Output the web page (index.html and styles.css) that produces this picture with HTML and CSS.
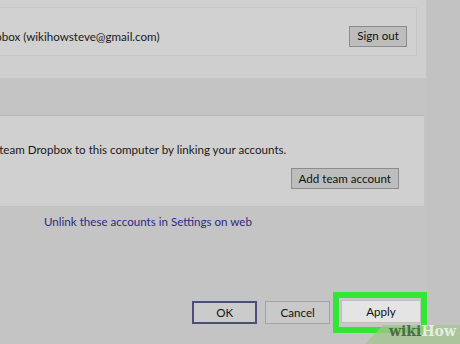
FILE: index.html
```html
<!DOCTYPE html>
<html lang="en">

<head>
    <meta charset="UTF-8">
    <meta name="viewport" content="width=device-width, initial-scale=1.0">
    <title>Dropbox Preferences - Account</title>
    <link rel="stylesheet" href="styles.css">
</head>

<body>
    <div class="janela">
        <!-- Conta pessoal -->
        <div class="painel-conta">
            <div class="caixa-conta">
                <span class="texto-conta">Dropbox (wikihowsteve@gmail.com)</span>
                <button class="botao">Sign out</button>
            </div>
        </div>

        <!-- Conta de equipe -->
        <div class="painel-equipe">
            <p class="texto-equipe">Add your team Dropbox to this computer by linking your accounts.</p>
            <div class="linha-botao">
                <button class="botao">Add team account</button>
            </div>
        </div>

        <a class="link-web" href="#">Unlink these accounts in Settings on web</a>

        <div class="rodape">
            <button class="botao botao-ok">OK</button>
            <button class="botao botao-rodape">Cancel</button>
            <div class="destaque">
                <button class="botao botao-apply">Apply</button>
            </div>
        </div>
    </div>

    <div class="marca">
        <svg class="marca-fundo" width="95" height="19" viewBox="0 0 95 19">
            <polygon points="0,19 18,0 95,0 95,19" fill="#a3c48f" fill-opacity="0.75" />
        </svg>
        <span class="marca-texto"><b class="wiki">wiki</b><b class="how">How</b></span>
    </div>
</body>

</html>
```

FILE: styles.css
```css
body {
    margin: 0;
    width: 460px;
    height: 344px;
    overflow: hidden;
    position: relative;
    background-color: #c2c2c2;
    font-family: Lato, "Noto Sans", sans-serif;
    font-size: 11.6px;
    color: #1a1a1a;
}

.janela {
    width: 427px;
    height: 344px;
    background-color: #c4c4c4;
}

.painel-conta {
    width: 426px;
    height: 78px;
    padding-top: 7px;
    box-sizing: border-box;
    background-color: #cfcfcf;
}

.caixa-conta {
    width: 417px;
    height: 49px;
    box-sizing: border-box;
    border: 1px solid #c6c6c6;
    border-left: none;
    background-color: #d1d1d1;
    display: flex;
    align-items: center;
    justify-content: space-between;
    padding: 9px 9px 0 0;
}

.texto-conta {
    margin-left: -24px;
    white-space: nowrap;
}

.botao {
    font-family: Lato, "Noto Sans", sans-serif;
    font-size: 11.6px;
    color: #111;
    background-color: #bdbdbd;
    border: 1px solid #8c8c8c;
    padding: 0 7px;
    height: 21px;
    line-height: 18px;
    cursor: pointer;
}

.painel-equipe {
    width: 424px;
    height: 91px;
    margin-top: 37px;
    box-sizing: border-box;
    border-top: 1px solid #b6b6b6;
    background-color: #d0d0d0;
    padding: 27px 25px 0 0;
}

.texto-equipe {
    margin: 0 0 0 -50px;
    white-space: nowrap;
}

.linha-botao {
    display: flex;
    justify-content: flex-end;
    margin-top: 12px;
}

.link-web {
    display: block;
    margin: 9px 0 0 44px;
    color: #2c2a86;
    text-decoration: none;
}

.rodape {
    display: flex;
    align-items: center;
    gap: 8px;
    margin: 64px 0 0 192px;
}

.rodape .botao {
    width: 79px;
    height: 23px;
}

.botao-rodape {
    background-color: #c9c9c9;
    border-color: #a3a3a3;
}

.botao-ok {
    background-color: #cbcbcb;
    border: 2px solid #4a4f7a;
}

.destaque {
    width: 96px;
    height: 41px;
    box-sizing: border-box;
    border: 6px solid #33e633;
    padding: 2px 0 0 2px;
    margin-left: -5px;
    background-color: #c8c8c8;
}

.rodape .botao-apply {
    width: 80px;
    background-color: #e4e4e4;
    border-color: #c0c0c0;
}

.marca {
    position: absolute;
    right: 0;
    bottom: 0;
    width: 95px;
    height: 19px;
}

.marca-fundo {
    position: absolute;
    left: 0;
    top: 0;
}

.marca-texto {
    position: absolute;
    right: 4px;
    top: -1px;
    font-family: "DejaVu Serif", "Liberation Serif", serif;
    font-size: 14px;
    line-height: 15px;
}

.wiki {
    color: #4f6b45;
}

.how {
    color: #e4eedc;
}
```
